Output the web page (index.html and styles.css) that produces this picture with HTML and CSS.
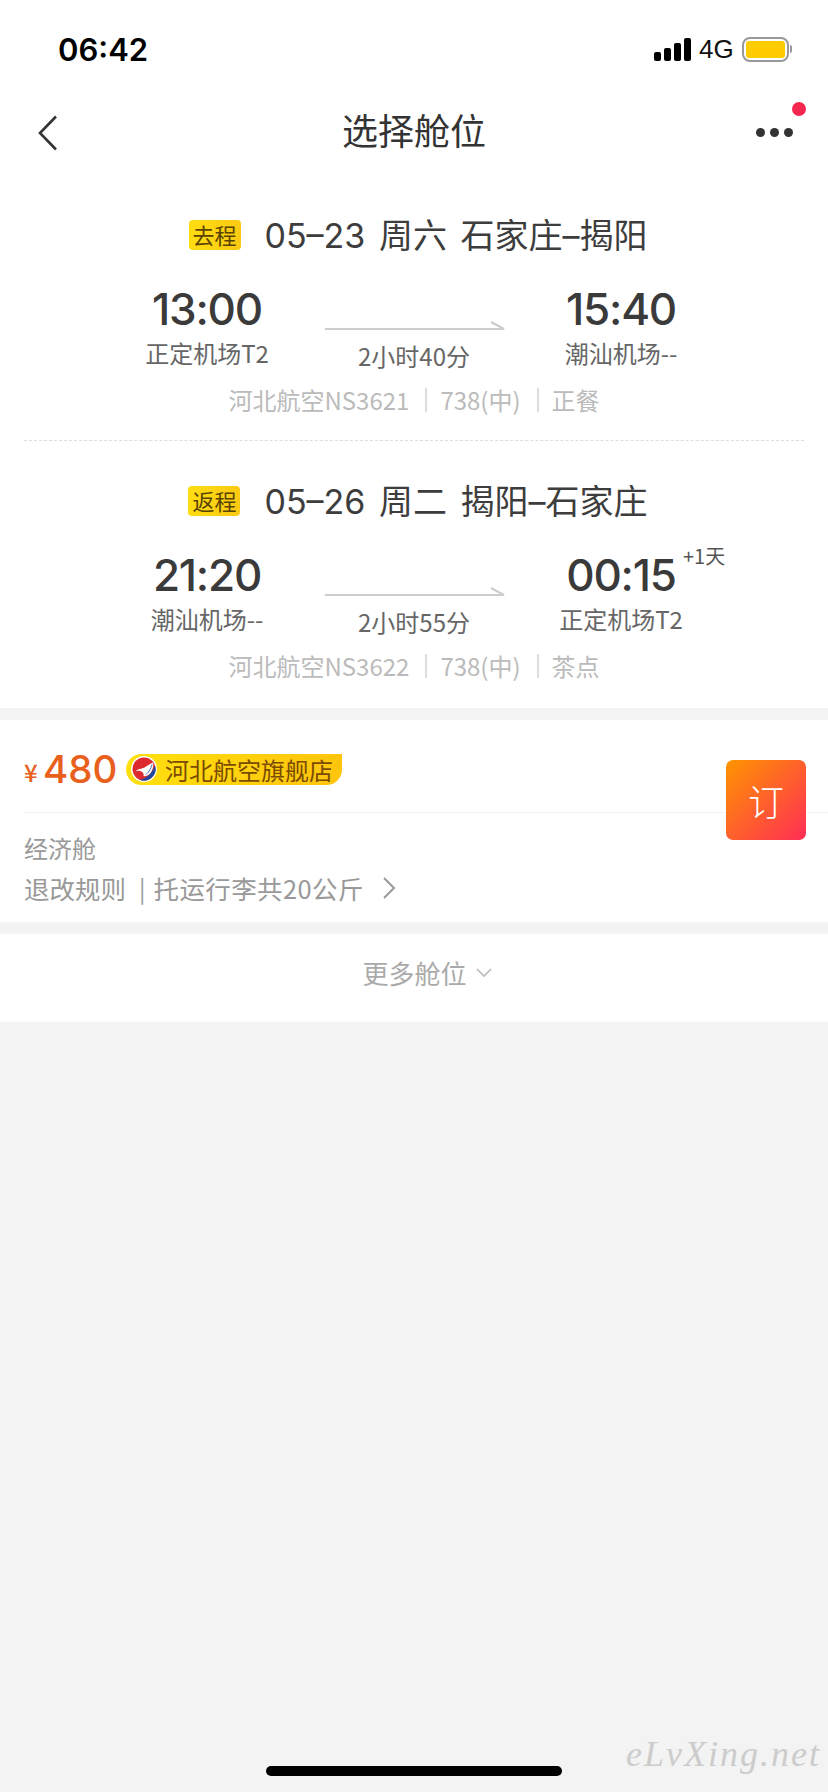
FILE: index.html
```html
<!DOCTYPE html>
<html>
<head>
    <title>选择舱位</title>
    <meta charset="utf-8">
    <link rel="stylesheet" href="styles.css">
</head>
<body>
    <div class="status">
        <span class="clock">06:42</span>
        <div class="status-right">
            <div class="signal"><i class="b1"></i><i class="b2"></i><i class="b3"></i><i class="b4"></i></div>
            <span class="net">4G</span>
            <div class="battery"><div class="battery-fill"></div></div>
            <div class="battery-tip"></div>
        </div>
    </div>

    <div class="nav">
        <svg class="back" width="20" height="36" viewBox="0 0 20 36"><path d="M18 1.5 2 18l16 16.5" fill="none" stroke="#333" stroke-width="2.6"/></svg>
        <h1 class="title">选择舱位</h1>
        <div class="more"><i></i><i></i><i></i></div>
        <div class="red-dot"></div>
    </div>

    <div class="flights">
        <div class="leg">
            <div class="leg-head">
                <span class="tag">去程</span>
                <span class="leg-title">05–23 周六 石家庄–揭阳</span>
            </div>
            <div class="times">
                <div class="point">
                    <div class="time">13:00</div>
                    <div class="airport">正定机场T2</div>
                </div>
                <div class="mid">
                    <svg width="180" height="10" viewBox="0 0 180 10"><path d="M0 9h179L166 2" fill="none" stroke="#ccc" stroke-width="2"/></svg>
                    <div class="duration">2小时40分</div>
                </div>
                <div class="point">
                    <div class="time">15:40</div>
                    <div class="airport">潮汕机场--</div>
                </div>
            </div>
            <div class="info">河北航空NS3621<span class="sep"></span>738(中)<span class="sep"></span>正餐</div>
        </div>
        <div class="leg-line"></div>
        <div class="leg leg-last">
            <div class="leg-head">
                <span class="tag">返程</span>
                <span class="leg-title">05–26 周二 揭阳–石家庄</span>
            </div>
            <div class="times">
                <div class="point">
                    <div class="time">21:20</div>
                    <div class="airport">潮汕机场--</div>
                </div>
                <div class="mid">
                    <svg width="180" height="10" viewBox="0 0 180 10"><path d="M0 9h179L166 2" fill="none" stroke="#ccc" stroke-width="2"/></svg>
                    <div class="duration">2小时55分</div>
                </div>
                <div class="point">
                    <div class="time">00:15</div>
                    <div class="airport">正定机场T2</div>
                    <span class="plus-day">+1天</span>
                </div>
            </div>
            <div class="info">河北航空NS3622<span class="sep"></span>738(中)<span class="sep"></span>茶点</div>
        </div>
    </div>

    <div class="cabin">
        <div class="price-row">
            <span class="yen">¥</span>
            <span class="price">480</span>
            <div class="shop">
                <svg class="shop-logo" width="26" height="26" viewBox="0 0 26 26">
                    <circle cx="13" cy="13" r="13" fill="#fff"/>
                    <circle cx="13" cy="13" r="11.5" fill="#dc2a2e"/>
                    <path d="M24 9.5A11.5 11.5 0 0 1 8 23.400C15 24 21 17 24 9.5z" fill="#1d4a9f"/>
                    <path d="M4.500 15.500C7 12.500 11 13 13.500 11.500 16.500 9.500 19.500 7.500 22 6.500 23 11 21 16 18 18.500 16 20 14 20.500 12.500 20 13.500 16.500 9 13.500 4.500 15.500z" fill="#fff"/>
                    <path d="M15 18.500C18 16 20 12.500 21 8.500" fill="none" stroke="#1d4a9f" stroke-width="0.8"/>
                </svg>
                <span>河北航空旗舰店</span>
            </div>
        </div>
        <div class="cabin-name">经济舱</div>
        <div class="rules">
            <span>退改规则</span><span class="rules-sep">|</span><span>托运行李共20公斤</span>
            <svg width="14" height="24" viewBox="0 0 14 24"><path d="M2 2l10 10L2 22" fill="none" stroke="#999" stroke-width="2"/></svg>
        </div>
        <button class="book">订</button>
    </div>

    <div class="more-cabin">
        <span>更多舱位</span>
        <svg width="16" height="10" viewBox="0 0 16 10"><path d="M1 1l7 7 7-7" fill="none" stroke="#bbb" stroke-width="1.6"/></svg>
    </div>

    <div class="watermark">eLvXing.net</div>
    <div class="home-bar"></div>
</body>
</html>
```

FILE: styles.css
```css
body {
    font-family: "Noto Sans CJK SC", "Noto Sans", sans-serif;
    background-color: #f3f3f3;
    margin: 0;
    padding: 0;
    width: 828px;
    height: 1792px;
    position: relative;
    overflow: hidden;
}
.status {
    height: 88px;
    background-color: #fff;
    display: flex;
    justify-content: space-between;
    align-items: center;
    padding: 10px 36px 0 58px;
    box-sizing: border-box;
}
.clock {
    font-family: Inter, sans-serif;
    font-size: 31px;
    font-weight: 600;
    color: #000;
}
.status-right {
    display: flex;
    align-items: center;
}
.signal {
    display: flex;
    align-items: flex-end;
    gap: 3px;
    height: 23px;
}
.signal i {
    display: block;
    width: 7px;
    background-color: #000;
    border-radius: 2px;
}
.signal .b1 { height: 9px; }
.signal .b2 { height: 13px; }
.signal .b3 { height: 18px; }
.signal .b4 { height: 23px; }
.net {
    font-family: "Liberation Sans", sans-serif;
    font-size: 26px;
    color: #111;
    margin-left: 8px;
    width: 35px;
}
.battery {
    width: 47px;
    height: 25px;
    border: 2.5px solid #999;
    border-radius: 8px;
    padding: 2px;
    box-sizing: border-box;
    margin-left: 8px;
}
.battery-fill {
    height: 100%;
    background-color: #ffcc00;
    border-radius: 3px;
}
.battery-tip {
    width: 2px;
    height: 8px;
    background-color: #999;
    border-radius: 0 2px 2px 0;
    margin-left: 1px;
}
.nav {
    height: 87px;
    background-color: #fff;
    position: relative;
    display: flex;
    align-items: center;
    justify-content: center;
}
.back {
    position: absolute;
    left: 38px;
    top: 27px;
}
.title {
    font-size: 36px;
    font-weight: 400;
    line-height: 50px;
    color: #333;
    margin: 0 0 6px;
}
.more {
    position: absolute;
    left: 756px;
    top: 40px;
    display: flex;
    gap: 5px;
}
.more i {
    display: block;
    width: 9px;
    height: 9px;
    border-radius: 50%;
    background-color: #333;
}
.red-dot {
    position: absolute;
    left: 792px;
    top: 14px;
    width: 14px;
    height: 14px;
    border-radius: 50%;
    background-color: #f5274f;
}
.flights {
    background-color: #fff;
}
.leg {
    padding: 45px 0 23px;
}
.leg-last {
    padding-bottom: 25px;
}
.leg-line {
    border-top: 1px dashed #ddd;
    margin: 0 24px;
}
.leg-head {
    display: flex;
    align-items: center;
    justify-content: center;
    height: 30px;
    padding-left: 8px;
}
.tag {
    width: 52px;
    height: 30px;
    line-height: 28px;
    text-align: center;
    background: linear-gradient(90deg, #ffdd11, #fbc914);
    border-radius: 4px;
    font-size: 22px;
    color: #5a4300;
    margin-right: 24px;
}
.leg-title {
    font-family: Inter, "Noto Sans CJK SC", sans-serif;
    font-size: 34px;
    line-height: 40px;
    color: #3d3d3d;
    word-spacing: 4px;
    white-space: pre;
    padding-top: 2px;
}
.times {
    display: flex;
    justify-content: center;
    margin-top: 34px;
}
.point {
    width: 234px;
    text-align: center;
    position: relative;
}
.time {
    font-family: Inter, sans-serif;
    font-size: 44px;
    font-weight: 500;
    letter-spacing: -1.2px;
    line-height: 50px;
    color: #3a3a3a;
}
.airport {
    font-size: 24px;
    line-height: 34px;
    color: #666;
    margin-top: 2px;
}
.mid {
    width: 180px;
    padding-top: 36px;
    text-align: center;
}
.mid svg {
    display: block;
    margin-left: 1px;
}
.duration {
    font-size: 24px;
    line-height: 34px;
    color: #666;
    margin-top: 9px;
    margin-bottom: 1px;
}
.plus-day {
    position: absolute;
    left: 179px;
    top: -8px;
    font-size: 20px;
    line-height: 28px;
    color: #555;
    white-space: nowrap;
}
.info {
    display: flex;
    justify-content: center;
    align-items: center;
    font-size: 24px;
    line-height: 34px;
    color: #bbb;
    margin-top: 9px;
}
.sep {
    width: 2px;
    height: 24px;
    background-color: #ddd;
    margin: 0 13px 0 16px;
}
.cabin {
    background-color: #fff;
    margin-top: 12px;
    padding: 0 0 15px 24px;
    position: relative;
}
.price-row {
    height: 93px;
    padding-top: 6px;
    box-sizing: border-box;
    display: flex;
    align-items: center;
    border-bottom: 1px solid #f2f2f2;
}
.yen {
    font-size: 24px;
    font-weight: 500;
    color: #e8601c;
    margin-top: 4px;
    width: 19px;
}
.price {
    font-family: Inter, sans-serif;
    font-size: 38.5px;
    font-weight: 500;
    color: #e8601c;
    width: 83px;
}
.shop {
    width: 216px;
    height: 31px;
    display: flex;
    align-items: center;
    background: linear-gradient(90deg, #ffe00f, #ffc40d);
    border-radius: 16px 0 16px 16px;
    box-sizing: border-box;
    padding-left: 5px;
}
.shop-logo {
    flex: none;
}
.shop span {
    font-size: 24px;
    line-height: 31px;
    color: #7a4b00;
    margin-left: 8px;
    white-space: nowrap;
}
.cabin-name {
    font-size: 24px;
    line-height: 36px;
    color: #999;
    margin-top: 17px;
}
.rules {
    display: flex;
    align-items: center;
    font-size: 25.5px;
    line-height: 36px;
    color: #999;
    margin-top: 4px;
    margin-bottom: 1px;
}
.rules-sep {
    margin: 0 8px 0 13px;
    font-size: 24px;
}
.rules svg {
    margin-left: 18px;
}
.rules span:nth-child(3) {
    letter-spacing: 0.4px;
}
.book {
    position: absolute;
    left: 726px;
    top: 40px;
    width: 80px;
    height: 80px;
    border: none;
    border-radius: 7px;
    background: linear-gradient(135deg, #ff9500, #ff2d55);
    color: #fff;
    font-family: "Noto Sans CJK SC", sans-serif;
    font-size: 36px;
    font-weight: 300;
    padding: 0;
}
.more-cabin {
    background-color: #fff;
    margin-top: 12px;
    height: 88px;
    display: flex;
    align-items: center;
    justify-content: center;
    font-size: 26px;
    color: #aaa;
    gap: 9px;
    padding: 0 0 11px 26px;
    box-sizing: border-box;
}
.watermark {
    position: absolute;
    left: 626px;
    top: 1733px;
    font-family: "Liberation Serif", serif;
    font-style: italic;
    font-size: 36px;
    letter-spacing: 2px;
    color: #ccc;
    white-space: nowrap;
}
.home-bar {
    position: absolute;
    left: 266px;
    top: 1766px;
    width: 296px;
    height: 10px;
    border-radius: 5px;
    background-color: #000;
}
```
